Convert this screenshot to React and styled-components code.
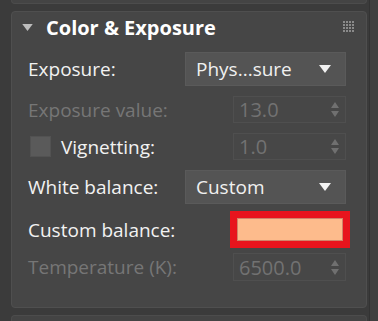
import styled, { createGlobalStyle } from "styled-components";

const GlobalStyle = createGlobalStyle`
  html, body {
    margin: 0;
    padding: 0;
    background: #3b3b3b;
  }
  body {
    font-family: "Open Sans", "Noto Sans", sans-serif;
  }
`;

const Page = styled.div`
  display: flex;
  width: 378px;
  height: 321px;
  overflow: hidden;
  background: #3b3b3b;
`;

const Column = styled.div`
  display: flex;
  flex-direction: column;
  gap: 7px;
  width: 356px;
  margin-left: 11px;
`;

const Stub = styled.div`
  height: ${(p) => p.$h}px;
  flex: none;
  background: #444444;
  border: 1px solid #4c4c4c;
  border-radius: ${(p) => (p.$top ? "0 0 4px 4px" : "4px 4px 0 0")};
  ${(p) => (p.$top ? "border-top: none;" : "border-bottom: none;")}
`;

const Scroll = styled.div`
  flex: none;
  width: 8px;
  margin-left: 2px;
  border-left: 1px solid #333;
  background: #404040;
`;

const Panel = styled.section`
  flex: none;
  height: 297px;
  box-sizing: border-box;
  background: #464646;
  border: 1px solid #4f4f4f;
  border-radius: 4px;
  padding: 0 20px 0 16px;
  display: flex;
  flex-direction: column;
`;

const Header = styled.div`
  display: flex;
  align-items: center;
  height: 30px;
  margin-left: -6px;
  margin-right: -9px;
  margin-bottom: 10px;
`;

const Title = styled.h2`
  margin: 0 0 0 13px;
  font-size: 20px;
  font-weight: 700;
  color: #ffffff;
  flex: 1;
`;

const Rows = styled.div`
  display: flex;
  flex-direction: column;
`;

const Row = styled.div`
  display: flex;
  align-items: center;
  justify-content: space-between;
  height: ${(p) => p.$h}px;
  margin-bottom: ${(p) => p.$gap}px;
`;

const LabelGroup = styled.div`
  display: flex;
  align-items: center;
  gap: 10px;
`;

const Label = styled.span`
  font-size: 19px;
  color: ${(p) => (p.$disabled ? "#767676" : "#f2f2f2")};
`;

const Check = styled.span`
  display: block;
  width: 21px;
  height: 21px;
  margin-left: 2px;
  box-sizing: border-box;
  background: #5a5a5a;
  border: 1px solid #525252;
`;

const Dropdown = styled.div`
  width: 161px;
  height: 34px;
  box-sizing: border-box;
  background: #545454;
  border: 1px solid #5a5a5a;
  display: flex;
  align-items: center;
  justify-content: space-between;
  padding: 0 14px 0 10px;
  font-size: 19px;
  color: #f0f0f0;
`;

const Spinner = styled.div`
  width: 113px;
  height: ${(p) => p.$h || 27}px;
  box-sizing: border-box;
  background: #474747;
  border: 1px solid #4f4f4f;
  display: flex;
  align-items: center;
  justify-content: space-between;
  padding: 0 6px 0 5px;
  font-size: 20px;
  color: #727272;
`;

const Swatch = styled.div`
  width: 120px;
  height: 37px;
  box-sizing: border-box;
  margin-right: -4px;
  border: 7px solid #e8141d;
  background: #fdbb8c;
  box-shadow: inset 0 0 0 1px #d0846a;
`;

const TriDown = ({ color = "#f2f2f2", w = 12, h = 8 }) => (
  <svg width={w} height={h} viewBox="0 0 12 8">
    <path d="M0 0 H12 L6 8 Z" fill={color} />
  </svg>
);

const Arrows = () => (
  <svg width="8" height="15" viewBox="0 0 8 15">
    <path d="M4 0 L8 6 H0 Z M0 9 H8 L4 15 Z" fill="#707070" />
  </svg>
);

const Grip = () => (
  <svg width="12" height="12" viewBox="0 0 12 12">
    {[0, 3, 6, 9].map((y) =>
      [0, 3, 6, 9].map((x) => (
        <rect key={`${x}-${y}`} x={x} y={y} width="2" height="2" fill="#8a8a8a" />
      ))
    )}
  </svg>
);

export default function App() {
  return (
    <Page>
      <GlobalStyle />
      <Column>
        <Stub $h={3} $top />
        <Panel>
          <Header>
            <TriDown color="#bdbdbd" w={11} h={7} />
            <Title>Color &amp; Exposure</Title>
            <Grip />
          </Header>
          <Rows>
            <Row $h={34} $gap={10}>
              <Label>Exposure:</Label>
              <Dropdown>
                Phys...sure
                <TriDown />
              </Dropdown>
            </Row>
            <Row $h={27} $gap={10}>
              <Label $disabled>Exposure value:</Label>
              <Spinner>
                13.0
                <Arrows />
              </Spinner>
            </Row>
            <Row $h={27} $gap={10}>
              <LabelGroup>
                <Check />
                <Label>Vignetting:</Label>
              </LabelGroup>
              <Spinner>
                1.0
                <Arrows />
              </Spinner>
            </Row>
            <Row $h={33} $gap={8}>
              <Label>White balance:</Label>
              <Dropdown>
                Custom
                <TriDown />
              </Dropdown>
            </Row>
            <Row $h={37} $gap={5}>
              <Label>Custom balance:</Label>
              <Swatch />
            </Row>
            <Row $h={28} $gap={0}>
              <Label $disabled>Temperature (K):</Label>
              <Spinner $h={28}>
                6500.0
                <Arrows />
              </Spinner>
            </Row>
          </Rows>
        </Panel>
        <Stub $h={10} />
      </Column>
      <Scroll />
    </Page>
  );
}
